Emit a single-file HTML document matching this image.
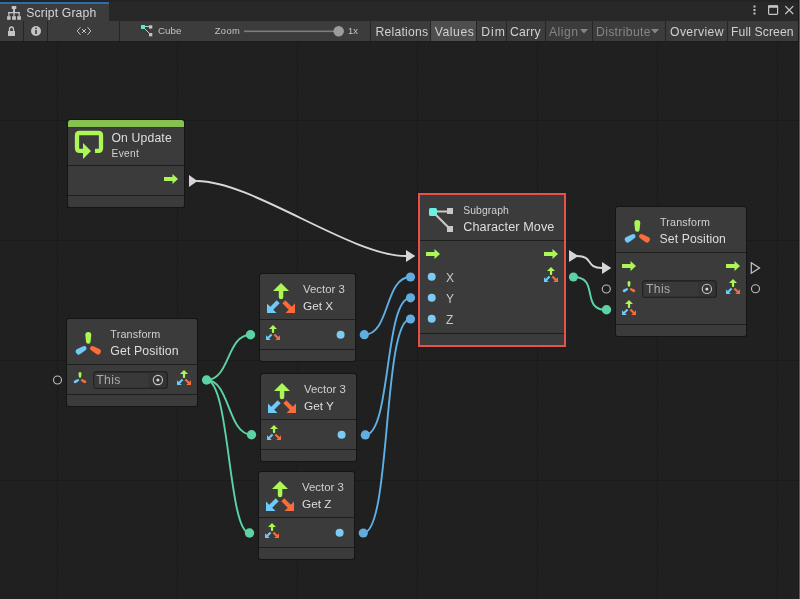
<!DOCTYPE html>
<html><head><meta charset="utf-8">
<style>
html,body{margin:0;padding:0;width:800px;height:599px;overflow:hidden;background:#202020;}
svg{display:block;position:absolute;left:0;top:0;will-change:transform;}
text{font-family:"Liberation Sans",sans-serif;}
</style></head>
<body>
<svg width="800" height="599" viewBox="0 0 800 599">
<defs>
  <pattern id="gmin" x="9" y="0" width="12" height="12" patternUnits="userSpaceOnUse">
    <rect x="0" y="0" width="1" height="12" fill="#1f1f1f"/>
    <rect x="0" y="0" width="12" height="1" fill="#1f1f1f"/>
  </pattern>
  <pattern id="gmaj" x="57" y="0" width="120" height="120" patternUnits="userSpaceOnUse">
    <rect x="0" y="0" width="1" height="120" fill="#1a1a1a"/>
    <rect x="0" y="0" width="120" height="1" fill="#1a1a1a"/>
  </pattern>
  <!-- flow arrow 14x10 -->
  <g id="flow"><rect x="0" y="3" width="9" height="4" fill="#acf656"/><path d="M8.5 0 L14 5 L8.5 10 Z" fill="#acf656"/></g>
  <!-- big vector3 icon 28x30 -->
  <g id="v3">
    <path d="M6 8 L14 0 L22 8 Z" fill="#acf656"/>
    <path d="M11.8 7.5 H16.3 V14 Q16.3 16.3 14 16.3 Q11.8 16.3 11.8 14 Z" fill="#acf656"/>
    <path d="M0 20.5 L0 30 L9.5 30 Z" fill="#6fcaf7"/>
    <line x1="3" y1="27" x2="11.2" y2="18.8" stroke="#6fcaf7" stroke-width="4.2"/>
    <path d="M28 20.5 L28 30 L18.5 30 Z" fill="#fb6c3a"/>
    <line x1="25" y1="27" x2="16.8" y2="18.8" stroke="#fb6c3a" stroke-width="4.2"/>
  </g>
  <!-- transform icon centered at 0,0 -->
  <g id="tf">
    <path d="M2.3 -4.6 L3 -11 A3 3 0 0 0 -3 -11 L-2.3 -4.6 A2.3 2.3 0 0 0 2.3 -4.6 Z" fill="#acf656"/>
    <path d="M-5.13 0.31 L-11.03 2.9 A3 3 0 0 0 -8.03 8.1 L-2.83 4.29 A2.3 2.3 0 0 0 -5.13 0.31 Z" fill="#6fcaf7"/>
    <path d="M2.83 4.29 L8.03 8.1 A3 3 0 0 0 11.03 2.9 L5.13 0.31 A2.3 2.3 0 0 0 2.83 4.29 Z" fill="#fb6c3a"/>
  </g>
  <g id="target">
    <circle cx="0" cy="0" r="4.6" fill="none" stroke="#c8c8c8" stroke-width="1.1"/>
    <circle cx="0" cy="0" r="1.5" fill="#d8d8d8"/>
  </g>
</defs>

<!-- canvas -->
<rect x="0" y="41" width="800" height="558" fill="#202020"/>
<rect x="0" y="41" width="800" height="558" fill="url(#gmin)"/>
<rect x="0" y="41" width="800" height="558" fill="url(#gmaj)"/>

<!-- ===== toolbar ===== -->
<rect x="0" y="0" width="800" height="21" fill="#282828"/>
<rect x="0" y="0" width="800" height="2" fill="#232323"/>
<rect x="0" y="4" width="109" height="17" fill="#3c3c3c"/>
<rect x="0" y="2" width="109" height="2" fill="#2f6cab"/>
<g fill="#c4c4c4">
  <rect x="11.7" y="6" width="4.6" height="3"/>
  <rect x="13" y="8.5" width="2" height="4"/>
  <rect x="8" y="12" width="12" height="1.3"/>
  <rect x="8.3" y="12" width="1.2" height="4.5"/>
  <rect x="13.4" y="12" width="1.2" height="4.5"/>
  <rect x="18.5" y="12" width="1.2" height="4.5"/>
  <rect x="7.1" y="16.2" width="3.5" height="3.6"/>
  <rect x="12.1" y="16.2" width="3.8" height="3.6"/>
  <rect x="17.2" y="16.2" width="3.7" height="3.6"/>
</g>
<text x="26.2" y="16.6" font-size="12.2" fill="#d4d4d4" textLength="70" lengthAdjust="spacing">Script Graph</text>
<!-- window controls -->
<g fill="#c4c4c4">
  <rect x="753.5" y="5.5" width="2" height="2"/>
  <rect x="753.5" y="9" width="2" height="2"/>
  <rect x="753.5" y="12.5" width="2" height="2"/>
</g>
<rect x="768.6" y="5.8" width="9" height="8.6" rx="0.8" fill="none" stroke="#c4c4c4" stroke-width="1.2"/>
<rect x="768.2" y="5.4" width="9.8" height="2.4" fill="#c4c4c4"/>
<path d="M785.3 6.1 L793.2 14 M793.2 6.1 L785.3 14" stroke="#c4c4c4" stroke-width="1.3"/>

<rect x="0" y="21" width="798" height="20" fill="#3c3c3c"/>
<rect x="798" y="21" width="2" height="20" fill="#191919"/>
<g fill="#262626">
  <rect x="23" y="21" width="1" height="20"/>
  <rect x="47" y="21" width="1" height="20"/>
  <rect x="119" y="21" width="1" height="20"/>
  <rect x="370" y="21" width="1" height="20"/>
  <rect x="430" y="21" width="1" height="20"/>
  <rect x="476" y="21" width="1" height="20"/>
  <rect x="506" y="21" width="1" height="20"/>
  <rect x="545" y="21" width="1" height="20"/>
  <rect x="592" y="21" width="1" height="20"/>
  <rect x="665" y="21" width="1" height="20"/>
  <rect x="727" y="21" width="1" height="20"/>
</g>
<rect x="431" y="21" width="45" height="20" fill="#4e4e4e"/>
<!-- lock -->
<path d="M9.5 31 V29.5 Q9.5 27 11.5 27 Q13.5 27 13.5 29.5 V31" fill="none" stroke="#c4c4c4" stroke-width="1.3"/>
<rect x="8" y="31" width="7" height="5" fill="#c4c4c4"/>
<!-- info -->
<circle cx="36" cy="31" r="5" fill="#c4c4c4"/>
<rect x="35.2" y="30" width="1.6" height="4" fill="#3c3c3c"/>
<rect x="35.2" y="27.6" width="1.6" height="1.5" fill="#3c3c3c"/>
<!-- <x> -->
<path d="M80.5 27.2 L77.2 31 L80.5 34.8 M87.5 27.2 L90.8 31 L87.5 34.8 M82 29 L86 33 M86 29 L82 33" fill="none" stroke="#c4c4c4" stroke-width="1"/>
<!-- subgraph small icon -->
<line x1="143" y1="26.5" x2="150.5" y2="26.5" stroke="#c4c4c4" stroke-width="1"/>
<line x1="143" y1="27" x2="150.5" y2="34.5" stroke="#c4c4c4" stroke-width="1"/>
<rect x="141" y="25" width="4" height="4" fill="#5ce6d6"/>
<rect x="149" y="25.3" width="3.3" height="3.3" fill="#c4c4c4"/>
<rect x="149" y="33" width="3.3" height="3.3" fill="#c4c4c4"/>
<text x="158" y="34" font-size="9.8" fill="#c4c4c4">Cube</text>
<text x="214.8" y="34" font-size="9.4" fill="#c4c4c4" textLength="25" lengthAdjust="spacing">Zoom</text>
<rect x="244" y="30.5" width="96" height="1.6" fill="#7d7d7d"/>
<circle cx="338.7" cy="31.2" r="5.2" fill="#9c9c9c"/>
<text x="348" y="34" font-size="9.4" fill="#c4c4c4">1x</text>
<g font-size="12.2" fill="#d0d0d0" lengthAdjust="spacing">
  <text x="375.5" y="36" textLength="52.5">Relations</text>
  <text x="434.8" y="36" textLength="39">Values</text>
  <text x="481.3" y="36" textLength="23.5">Dim</text>
  <text x="510" y="36" textLength="30.5">Carry</text>
  <text x="549" y="36" textLength="29" fill="#858585">Align</text>
  <text x="596" y="36" textLength="54.5" fill="#858585">Distribute</text>
  <text x="670" y="36" textLength="53.6">Overview</text>
  <text x="731" y="36" textLength="62.6">Full Screen</text>
</g>
<path d="M580 29 L588 29 L584 33.5 Z" fill="#858585"/>
<path d="M651 29 L659 29 L655 33.5 Z" fill="#858585"/>
<rect x="0" y="41" width="800" height="1" fill="#1c1c1c"/>

<!-- ===== edges ===== -->
<g fill="none" stroke-linecap="round">
  <path d="M197 181 C252 181 351 256 406 256" stroke="#d8d8d8" stroke-width="1.9"/>
  <path d="M577 256 C594 256 585 268 602 268" stroke="#d8d8d8" stroke-width="1.9"/>
  <path d="M206.5 380 C230 380 226.5 334.7 250.5 334.7" stroke="#5dd3a5" stroke-width="1.9"/>
  <path d="M206.5 380 C230 380 227.5 434.7 251.5 434.7" stroke="#5dd3a5" stroke-width="1.9"/>
  <path d="M206.5 380 C230 380 228 533 249.5 533" stroke="#5dd3a5" stroke-width="1.9"/>
  <path d="M573.5 277 C600 277 580 310 606.5 310" stroke="#5dd3a5" stroke-width="1.9"/>
  <path d="M364.3 334.7 C390 334.7 384.5 277 410.5 277" stroke="#5eb0e6" stroke-width="1.9"/>
  <path d="M365.3 434.9 C391 434.9 384.5 297.8 410.5 297.8" stroke="#5eb0e6" stroke-width="1.9"/>
  <path d="M363.3 533 C391.3 533 382.5 319 410.5 319" stroke="#5eb0e6" stroke-width="1.9"/>
</g>

<!-- ===== nodes ===== -->
<!-- On Update -->
<rect x="67" y="119" width="118" height="89" rx="2.5" fill="#151515"/>
<rect x="68" y="120" width="116" height="87" rx="2" fill="#3b3b3b"/>
<path d="M68 127 V123 Q68 120 71 120 H181 Q184 120 184 123 V127 Z" fill="#86c24f"/>
<rect x="68" y="127" width="116" height="1" fill="#36343a"/>
<rect x="68" y="165" width="116" height="1" fill="#1f1f1f"/>
<rect x="68" y="195" width="116" height="1" fill="#1f1f1f"/>
<path d="M84 150.85 H79.5 Q77 150.85 77 148 V135.5 Q77 133 79.5 133 H98.5 Q101 133 101 135.5 V148 Q101 150.85 98.5 150.85 H95" fill="none" stroke="#acf656" stroke-width="4.3"/>
<path d="M83 143 L91 151 L83 159 Z" fill="#acf656"/>
<text x="111.4" y="142" font-size="12.2" fill="#dedede" textLength="60.3" lengthAdjust="spacing">On Update</text>
<text x="111.6" y="156.6" font-size="10.2" fill="#d0d0d0" textLength="27.3" lengthAdjust="spacing">Event</text>
<use href="#flow" x="164" y="174"/>
<path d="M189 175 L197.5 181 L189 187 Z" fill="#d6d6d6"/>

<!-- Subgraph -->
<rect x="418" y="193" width="148" height="154" fill="#e8504a"/>
<rect x="420" y="195" width="144" height="150" fill="#3b3b3b"/>
<rect x="420" y="240" width="144" height="1" fill="#1f1f1f"/>
<rect x="420" y="333" width="144" height="1" fill="#1f1f1f"/>
<line x1="433" y1="211.5" x2="449" y2="211.5" stroke="#c8c8c8" stroke-width="2"/>
<line x1="433" y1="212" x2="450" y2="229" stroke="#c8c8c8" stroke-width="2.2"/>
<rect x="429" y="208" width="8" height="8" rx="1.5" fill="#6cf1e0"/>
<rect x="447" y="208" width="6" height="6" fill="#c8c8c8"/>
<rect x="447" y="226" width="6" height="6" fill="#c8c8c8"/>
<text x="463.2" y="213.9" font-size="10.4" fill="#d0d0d0" textLength="45.6" lengthAdjust="spacing">Subgraph</text>
<text x="463.2" y="231" font-size="12.65" fill="#dedede" textLength="91.2" lengthAdjust="spacing">Character Move</text>
<use href="#flow" x="426" y="249"/>
<use href="#flow" x="544" y="249"/>
<circle cx="431.7" cy="276.7" r="4" fill="#7ccbf5"/>
<circle cx="431.7" cy="297.7" r="4" fill="#7ccbf5"/>
<circle cx="431.7" cy="318.7" r="4" fill="#7ccbf5"/>
<g font-size="12" fill="#c8c8c8">
  <text x="446" y="282">X</text>
  <text x="446" y="303">Y</text>
  <text x="446" y="324">Z</text>
</g>
<use href="#v3" transform="translate(544 267) scale(0.5)"/>
<path d="M406 250 L415.3 256 L406 262 Z" fill="#d6d6d6"/>
<path d="M569 250 L578.5 256 L569 262 Z" fill="#d6d6d6"/>
<circle cx="410.5" cy="277" r="4.6" fill="#62ade0"/>
<circle cx="410.5" cy="297.8" r="4.6" fill="#62ade0"/>
<circle cx="410.5" cy="319" r="4.6" fill="#62ade0"/>
<circle cx="573.4" cy="277" r="4.5" fill="#5dd3a5"/>

<!-- Set Position -->
<rect x="615" y="206" width="132" height="131" rx="2.5" fill="#151515"/>
<rect x="616" y="207" width="130" height="129" rx="2" fill="#3b3b3b"/>
<rect x="616" y="252" width="130" height="1" fill="#1f1f1f"/>
<rect x="616" y="324" width="130" height="1" fill="#1f1f1f"/>
<use href="#tf" x="637.3" y="234"/>
<text x="660" y="226" font-size="10.7" fill="#d0d0d0" textLength="49.8" lengthAdjust="spacing">Transform</text>
<text x="659.6" y="242.75" font-size="12.2" fill="#dedede" textLength="66.3" lengthAdjust="spacing">Set Position</text>
<use href="#flow" x="622" y="261"/>
<use href="#flow" x="726" y="261"/>
<use href="#tf" transform="translate(629 288) scale(0.5)"/>
<rect x="642" y="280" width="75" height="18" rx="3.5" fill="#232323"/>
<rect x="643.3" y="281.8" width="56" height="15" rx="1.5" fill="#393939"/>
<rect x="698" y="281.2" width="17.7" height="15.5" rx="2" fill="#333333"/>
<use href="#target" x="706.9" y="288.9"/>
<text x="646.1" y="292.7" font-size="12.2" fill="#a9a9a9" textLength="24" lengthAdjust="spacing">This</text>
<use href="#v3" transform="translate(622 300) scale(0.5)"/>
<use href="#v3" transform="translate(726 279) scale(0.5)"/>
<path d="M602 262 L611.3 268 L602 274 Z" fill="#d6d6d6"/>
<path d="M751.3 262.8 L759.5 268 L751.3 273.2 Z" fill="none" stroke="#c8c8c8" stroke-width="1.2"/>
<circle cx="606.3" cy="289" r="4" fill="none" stroke="#bdbdbd" stroke-width="1.1"/>
<circle cx="755.5" cy="288.7" r="4" fill="none" stroke="#bdbdbd" stroke-width="1.1"/>
<circle cx="606.5" cy="309.8" r="4.7" fill="#5dd3a5"/>

<!-- Get Position -->
<rect x="66" y="318" width="132" height="89" rx="2.5" fill="#151515"/>
<rect x="67" y="319" width="130" height="87" rx="2" fill="#3b3b3b"/>
<rect x="67" y="364" width="130" height="1" fill="#1f1f1f"/>
<rect x="67" y="394" width="130" height="1" fill="#1f1f1f"/>
<use href="#tf" x="88.3" y="346"/>
<text x="110.3" y="338" font-size="10.8" fill="#d0d0d0" textLength="50" lengthAdjust="spacing">Transform</text>
<text x="110.3" y="354.8" font-size="12.3" fill="#dedede" textLength="68.3" lengthAdjust="spacing">Get Position</text>
<use href="#tf" transform="translate(80 379) scale(0.5)"/>
<rect x="93" y="371" width="75" height="18" rx="3.5" fill="#232323"/>
<rect x="94.3" y="372.8" width="56" height="15" rx="1.5" fill="#393939"/>
<rect x="148.8" y="372.2" width="17.9" height="15.5" rx="2" fill="#333333"/>
<use href="#target" x="157.9" y="380"/>
<text x="96.3" y="383.75" font-size="12.2" fill="#a9a9a9" textLength="24" lengthAdjust="spacing">This</text>
<use href="#v3" transform="translate(177 370) scale(0.5)"/>
<circle cx="57.5" cy="380" r="4" fill="none" stroke="#bdbdbd" stroke-width="1.1"/>
<circle cx="206.6" cy="380" r="4.7" fill="#5dd3a5"/>

<!-- Get X -->
<rect x="259" y="273" width="97" height="89" rx="2.5" fill="#151515"/>
<rect x="260" y="274" width="95" height="87" rx="2" fill="#3b3b3b"/>
<rect x="260" y="319" width="95" height="1" fill="#1f1f1f"/>
<rect x="260" y="349" width="95" height="1" fill="#1f1f1f"/>
<use href="#v3" x="267" y="283"/>
<text x="303" y="293" font-size="11.4" fill="#d0d0d0">Vector 3</text>
<text x="303" y="309.6" font-size="11.8" fill="#dedede">Get X</text>
<use href="#v3" transform="translate(266 325) scale(0.5)"/>
<circle cx="340.6" cy="334.7" r="4" fill="#7ccbf5"/>
<circle cx="250.5" cy="334.7" r="4.7" fill="#5dd3a5"/>
<circle cx="364.3" cy="334.7" r="4.6" fill="#62ade0"/>

<!-- Get Y -->
<rect x="260" y="373" width="97" height="89" rx="2.5" fill="#151515"/>
<rect x="261" y="374" width="95" height="87" rx="2" fill="#3b3b3b"/>
<rect x="261" y="419" width="95" height="1" fill="#1f1f1f"/>
<rect x="261" y="449" width="95" height="1" fill="#1f1f1f"/>
<use href="#v3" x="268" y="383"/>
<text x="304" y="393" font-size="11.4" fill="#d0d0d0">Vector 3</text>
<text x="304" y="409.6" font-size="11.8" fill="#dedede">Get Y</text>
<use href="#v3" transform="translate(267 425) scale(0.5)"/>
<circle cx="341.6" cy="434.7" r="4" fill="#7ccbf5"/>
<circle cx="251.5" cy="434.7" r="4.7" fill="#5dd3a5"/>
<circle cx="365.3" cy="434.9" r="4.6" fill="#62ade0"/>

<!-- Get Z -->
<rect x="258" y="471" width="97" height="89" rx="2.5" fill="#151515"/>
<rect x="259" y="472" width="95" height="87" rx="2" fill="#3b3b3b"/>
<rect x="259" y="517" width="95" height="1" fill="#1f1f1f"/>
<rect x="259" y="547" width="95" height="1" fill="#1f1f1f"/>
<use href="#v3" x="266" y="481"/>
<text x="302" y="491" font-size="11.4" fill="#d0d0d0">Vector 3</text>
<text x="302" y="507.6" font-size="11.8" fill="#dedede">Get Z</text>
<use href="#v3" transform="translate(265 523) scale(0.5)"/>
<circle cx="339.6" cy="532.7" r="4" fill="#7ccbf5"/>
<circle cx="249.5" cy="533" r="4.7" fill="#5dd3a5"/>
<circle cx="363.3" cy="533" r="4.6" fill="#62ade0"/>
<rect x="798" y="0" width="1" height="599" fill="#1b1b1b"/>
<rect x="799" y="0" width="1" height="599" fill="#5c5c5c"/>
</svg>
</body></html>
